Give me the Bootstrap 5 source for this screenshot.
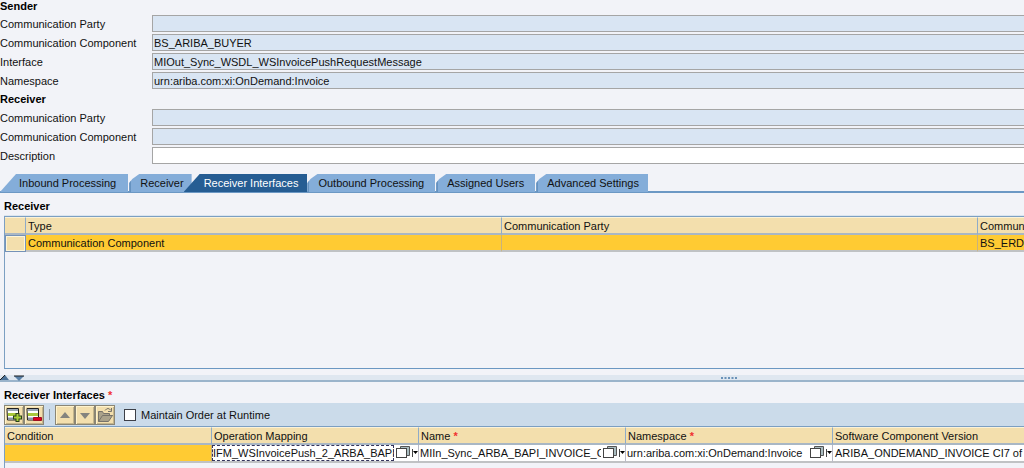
<!DOCTYPE html>
<html lang="en">
<head>
<meta charset="utf-8">
<meta name="viewport" content="width=device-width, initial-scale=1">
<title>Receiver Determination</title>
<link href="https://cdn.jsdelivr.net/npm/bootstrap@5.3.0/dist/css/bootstrap.min.css" rel="stylesheet">
<style>
  body { font: 11px/14px "Liberation Sans", Arial, sans-serif; color: #111; background: #f2f3f8; }
  .section-title { font-size: 11px; line-height: 13px; font-weight: 700; color: #000; margin: 0; padding-bottom: 2px; }
  .title-mid { padding-top: 4px; padding-bottom: 3px; }
  .title-pane { padding: 7px 0 3px 4px; }
  .title-low { padding: 7px 0 1px 4px; }
  .req { color: #f03030; font-weight: 700; }

  /* object header form */
  .head-form { display: grid; grid-template-columns: 152px 1fr; row-gap: 2px; }
  .head-form label { line-height: 17px; padding-top: 1px; height: 17px; }
  .fld { height: 17px; min-width: 0; width: 100%; border: 1px solid #a5a5a5; border-right: 0; border-radius: 0; padding: 0 1px; font: inherit; line-height: 15px; color: #111; background: #fff; }
  .fld[readonly] { background: #d9e5f3; }

  /* tab strip */
  .strip { border-bottom: 2px solid #6c98c4; height: 19px; margin-top: 10px; }
  .tab-btn { border: 0; height: 18px; padding: 0 11px 1px 11px; font: inherit; color: #111; background: #84add9; white-space: nowrap; text-align: left; margin-right: 1px; clip-path: polygon(0 9px, 3px 5px, 10px 0, 100% 0, 100% 100%, 0 100%); box-shadow: inset 2px 0 #6592c0; }
  .tab-first { padding-left: 19px; padding-right: 12px; clip-path: polygon(16px 0, 100% 0, 100% 100%, 0 100%); box-shadow: none; }
  .tab-prev { padding-right: 8px; }
  .tab-on { padding-left: 20px; padding-right: 9px; margin-left: -9px; margin-right: 0; color: #fff; background: #265d93; clip-path: polygon(16px 0, 100% 0, 100% 100%, 0 100%); box-shadow: none; z-index: 1; }
  .tab-last { padding-right: 9px; }

  /* grids */
  .pane { margin-left: 4px; border: 1px solid #7c9fc2; border-right: 0; overflow: hidden; }
  .pane-top { height: 153px; border-bottom-color: #6b97c2; box-shadow: 0 -1px #dbe5ef; }
  .pane-low { border-bottom: 0; }
  .grid { table-layout: fixed; border-collapse: separate; border-spacing: 0; width: 1449px; }
  .grid th, .grid td { height: 17px; padding: 0 2px; line-height: 14px; font-weight: 400; white-space: nowrap; overflow: hidden; border-right: 1px solid #8fabc8; border-bottom: 2px solid #a9b7c4; text-align: left; vertical-align: middle; }
  .grid th { background: #f3dfad; border-top: 1px solid #fbf2d8; height: 18px; padding-top: 1px; }
  .grid td { background: #ffcb33; border-right-color: #c9b27c; border-bottom-color: #c0c2c4; }
  .grid .row-head { background: #f3dfad; border: 1px solid #7592b8; box-shadow: inset 0 0 0 1px #fdf6da; }
  .grid td.edit { background: #fff; padding: 0; border-right-color: #b9bac6; }
  .grid td.read-cell { padding-left: 2px; }
  .col-mark { width: 21px; }
  .col-wide { width: 476px; }
  .col-map { width: 207px; }
  .cell-in { flex: 1 1 0; min-width: 0; height: 16px; border: 0; padding: 0 0 0 1px; font: inherit; color: #111; background: #fff; }
  .cell-in.focus-cell { outline: 1px dashed #33335c; outline-offset: -1px; }
  .pick { border: 0; background: none; padding: 0; width: 24px; height: 16px; display: block; flex: none; }
  .pick svg, .tool svg { display: block; }

  /* splitter and toolbar */
  .splitter { height: 7px; margin-top: 6px; background: #dfe7f0; border-bottom: 2px solid #9bb4cb; }
  .splitter button { border: 0; padding: 0; background: none; height: 6px; }
  .grip { margin-left: 68%; }
  .tools { margin-left: 4px; height: 23px; background: #cbdbea; }
  .tool { width: 20px; height: 20px; padding: 0; background: #f3dfad; border: 1px solid #8b8675; box-shadow: inset 1px 1px #fff3cd, inset -1px -1px #c4b58b; }
  .sep { width: 1px; height: 11px; background: #8b9aa8; margin: 0 5px; }
  .tick { appearance: none; width: 12px; height: 12px; border: 1px solid #3d4048; background: #fff; margin: 0 5px 0 9px; }
  .tick:checked { background: #265d93; }
</style>
</head>
<body class="d-flex flex-column min-vh-100 overflow-hidden">
  <form>
    <h2 class="section-title">Sender</h2>
    <div class="head-form">
      <label for="sp">Communication Party</label><input class="fld" id="sp" readonly>
      <label for="sc">Communication Component</label><input class="fld" id="sc" readonly value="BS_ARIBA_BUYER">
      <label for="si">Interface</label><input class="fld" id="si" readonly value="MIOut_Sync_WSDL_WSInvoicePushRequestMessage">
      <label for="sn">Namespace</label><input class="fld" id="sn" readonly value="urn:ariba.com:xi:OnDemand:Invoice">
    </div>
    <h2 class="section-title title-mid">Receiver</h2>
    <div class="head-form">
      <label for="rp">Communication Party</label><input class="fld" id="rp" readonly>
      <label for="rc">Communication Component</label><input class="fld" id="rc" readonly>
      <label for="ds">Description</label><input class="fld" id="ds">
    </div>
  </form>

  <div class="strip d-flex" role="tablist">
    <button class="tab-btn tab-first" role="tab" type="button">Inbound Processing</button>
    <button class="tab-btn tab-prev" role="tab" type="button">Receiver</button>
    <button class="tab-btn tab-on" role="tab" type="button" aria-selected="true">Receiver Interfaces</button>
    <button class="tab-btn" role="tab" type="button">Outbound Processing</button>
    <button class="tab-btn" role="tab" type="button">Assigned Users</button>
    <button class="tab-btn tab-last" role="tab" type="button">Advanced Settings</button>
  </div>

  <h2 class="section-title title-pane">Receiver</h2>
  <div class="pane pane-top">
    <table class="grid">
      <colgroup><col class="col-mark"><col class="col-wide"><col class="col-wide"><col class="col-wide"></colgroup>
      <thead><tr><th></th><th scope="col">Type</th><th scope="col">Communication Party</th><th scope="col">Communication Component</th></tr></thead>
      <tbody><tr><td class="row-head"></td><td>Communication Component</td><td></td><td>BS_ERD</td></tr></tbody>
    </table>
  </div>

  <div class="splitter d-flex">
    <button type="button" aria-label="Expand down"><svg class="d-block" width="10" height="6"><path d="M0 5L5 0l4 5z" fill="#4c7196"/><path d="M0 5L5 0" stroke="#222" fill="none"/></svg></button>
    <button type="button" class="ms-1" aria-label="Expand up"><svg class="d-block" width="10" height="6"><path d="M0 1h10L5 6z" fill="#5a81a8"/><path d="M0 1h10" stroke="#222"/></svg></button>
    <svg class="grip" width="18" height="5"><path d="M1 3h17" stroke="#6a92b8" stroke-width="2" stroke-dasharray="2 1.5"/></svg>
  </div>

  <h2 class="section-title title-low">Receiver Interfaces <span class="req">*</span></h2>
  <div class="tools d-flex align-items-center" role="toolbar">
    <button class="tool" type="button" aria-label="Insert row"><svg width="18" height="18"><path d="M2 2.500h11.500V14H2.500z" fill="#fff" stroke="#222"/><path d="M3 4h10" stroke="#9aa8b8" stroke-width="2"/><path d="M3 7h10v3H3z" fill="#a9c83c"/><path d="M3 12.500h8" stroke="#8793a5" stroke-width="2"/><path d="M12.500 7v9M8 11.500h9" stroke="#29401a" stroke-width="4"/><path d="M12.500 8v7M9 11.500h7" stroke="#a8cf3a" stroke-width="2"/></svg></button>
    <button class="tool" type="button" aria-label="Delete row"><svg width="18" height="18"><path d="M2 2.500h11.500V14H2.500z" fill="#fff" stroke="#222"/><path d="M3 4h10" stroke="#9aa8b8" stroke-width="2"/><path d="M3 7h10v3H3z" fill="#a9c83c"/><path d="M3 12.500h8" stroke="#8793a5" stroke-width="2"/><path d="M8.500 11.500h8v3h-8z" fill="#e00020" stroke="#a01020"/></svg></button>
    <span class="sep"></span>
    <button class="tool" type="button" aria-label="Move up"><svg width="18" height="18"><path d="M4 12l5-6 5 6z" fill="#85847e"/></svg></button>
    <button class="tool" type="button" aria-label="Move down"><svg width="18" height="18"><path d="M4 7h10l-5 6z" fill="#85847e"/></svg></button>
    <button class="tool" type="button" aria-label="Open"><svg width="18" height="18"><path d="M2.500 15.500v-10h4l1 2h6v2h3l-4 6z" fill="#aaa28b" stroke="#77736a"/><path d="M2.500 15.500l4-6h10" fill="none" stroke="#77736a"/><path d="M9 4.500q3-4 6 0M15.500 2v3.500H12" fill="none" stroke="#77736a"/></svg></button>
    <input class="tick" type="checkbox" id="mo"><label for="mo">Maintain Order at Runtime</label>
  </div>
  <div class="pane pane-low flex-grow-1">
    <table class="grid">
      <colgroup><col class="col-map"><col class="col-map"><col class="col-map"><col class="col-map"><col></colgroup>
      <thead><tr><th scope="col">Condition</th><th scope="col">Operation Mapping</th><th scope="col">Name <span class="req">*</span></th><th scope="col">Namespace <span class="req">*</span></th><th scope="col">Software Component Version</th></tr></thead>
      <tbody><tr>
        <td></td>
        <td class="edit"><div class="d-flex"><input class="cell-in focus-cell" aria-label="Operation Mapping" value="IFM_WSInvoicePush_2_ARBA_BAPI"><button class="pick" type="button" aria-label="Choose mapping"><svg width="24" height="16"><path d="M6.500 4V1.500h9v9H12" fill="#a9bcc0" stroke="#555"/><rect x="2.500" y="3.500" width="10" height="9" fill="#fff" stroke="#444"/><path d="M18.500 4v8" stroke="#444"/><path d="M19 6h5l-2.500 3z"/></svg></button></div></td>
        <td class="edit"><div class="d-flex"><input class="cell-in" aria-label="Name" value="MIIn_Sync_ARBA_BAPI_INVOICE_CREATE"><button class="pick" type="button" aria-label="Choose name"><svg width="24" height="16"><path d="M6.500 4V1.500h9v9H12" fill="#a9bcc0" stroke="#555"/><rect x="2.500" y="3.500" width="10" height="9" fill="#fff" stroke="#444"/><path d="M18.500 4v8" stroke="#444"/><path d="M19 6h5l-2.500 3z"/></svg></button></div></td>
        <td class="edit"><div class="d-flex"><input class="cell-in" aria-label="Namespace" value="urn:ariba.com:xi:OnDemand:Invoice"><button class="pick" type="button" aria-label="Choose namespace"><svg width="24" height="16"><path d="M6.500 4V1.500h9v9H12" fill="#a9bcc0" stroke="#555"/><rect x="2.500" y="3.500" width="10" height="9" fill="#fff" stroke="#444"/><path d="M18.500 4v8" stroke="#444"/><path d="M19 6h5l-2.500 3z"/></svg></button></div></td>
        <td class="edit read-cell">ARIBA_ONDEMAND_INVOICE CI7 of ariba.com</td>
      </tr></tbody>
    </table>
  </div>
<script src="https://cdn.jsdelivr.net/npm/bootstrap@5.3.0/dist/js/bootstrap.bundle.min.js"></script>
</body>
</html>
